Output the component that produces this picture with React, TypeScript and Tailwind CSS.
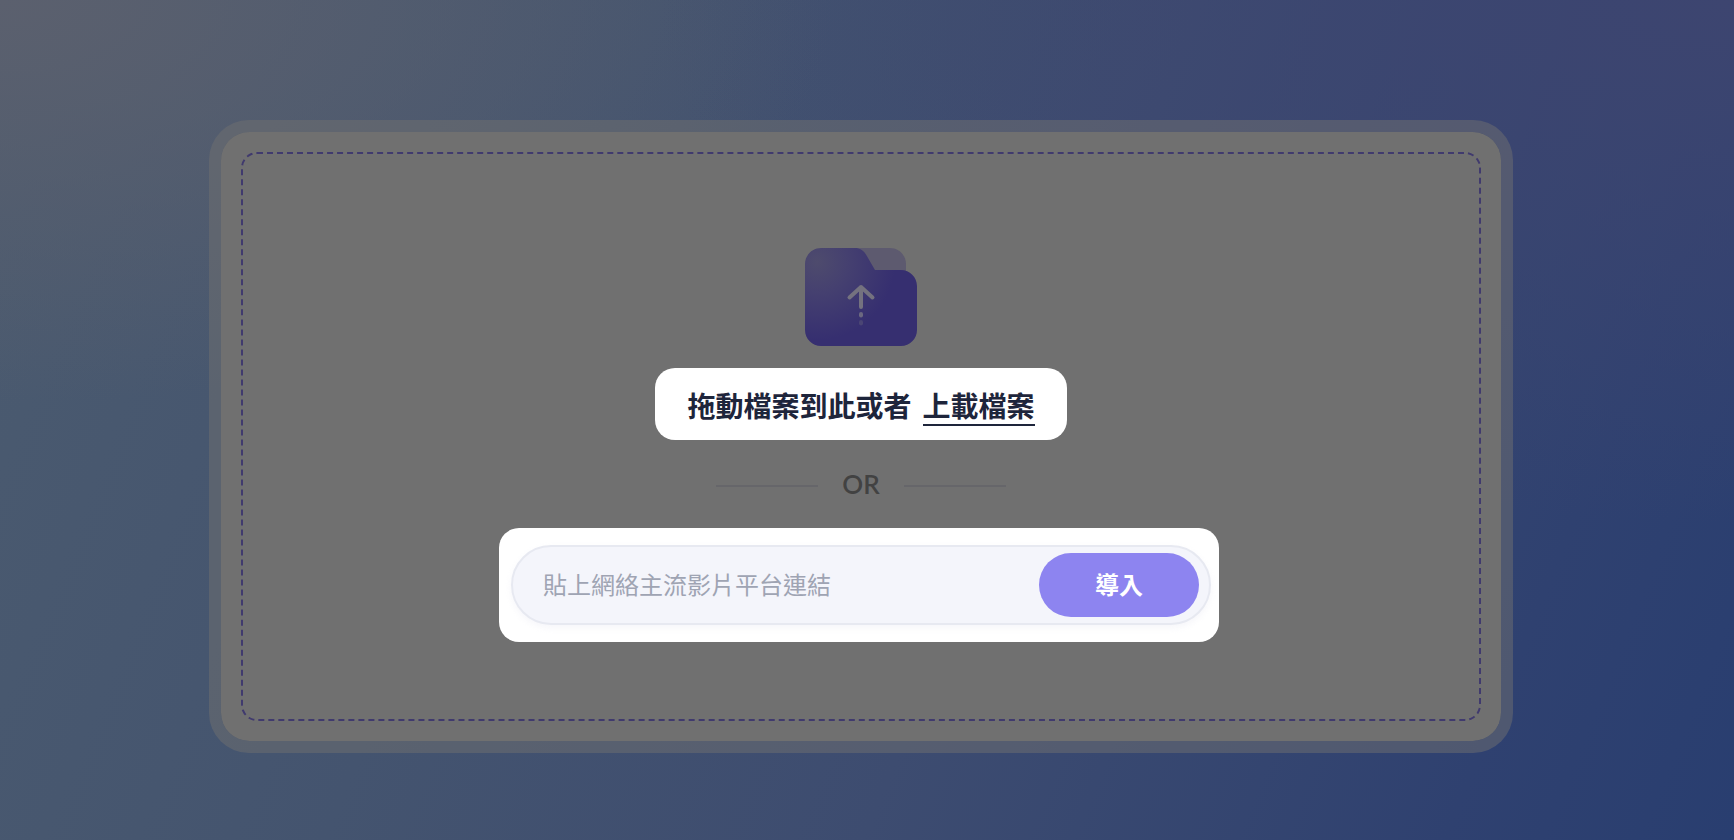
import { FormEvent, useRef, useState } from "react";

function FolderUploadIcon() {
  return (
    <svg width="112" height="98" viewBox="0 0 112 98" fill="none" aria-hidden="true">
      <defs>
        <radialGradient id="folder" cx="0" cy="0" r="1" gradientUnits="userSpaceOnUse" gradientTransform="translate(12 14) rotate(45) scale(78 78)">
          <stop stopColor="#4e4b6d" />
          <stop offset="0.4" stopColor="#454070" />
          <stop offset="1" stopColor="#362f70" />
        </radialGradient>
      </defs>
      <path d="M50 0H85C93.800 0 101 7.200 101 16V34H50Z" fill="#5d5a6f" />
      <path d="M16 0H50C55 0 58.500 2.500 61 6.500L70 22H96C104.800 22 112 29.200 112 38V82C112 90.800 104.800 98 96 98H16C7.200 98 0 90.800 0 82V16C0 7.200 7.200 0 16 0Z" fill="url(#folder)" />
      <path d="M56 59V39M44.500 49.500L56 39L67.500 49.500" stroke="#74727f" strokeWidth="4" strokeLinecap="round" strokeLinejoin="round" />
      <rect x="54" y="64" width="4" height="5.500" rx="2" fill="#6b6880" />
      <rect x="54" y="72" width="4" height="5.500" rx="2" fill="#4a4574" />
    </svg>
  );
}

export default function App() {
  const fileInput = useRef<HTMLInputElement>(null);
  const [link, setLink] = useState("");
  const submit = (event: FormEvent) => event.preventDefault();

  return (
    <main className="min-h-screen bg-[radial-gradient(ellipse_at_0%_0%,#5b606e_0%,#5b606e00_34%),radial-gradient(ellipse_at_100%_0%,#3d4570_0%,#3d457000_44%),linear-gradient(112deg,#4b5b6f_0%,#44546f_32%,#3d4c70_58%,#2f4170_86%,#293e70_100%)] pt-[120px] pr-[221px] pb-[87px] pl-[209px] font-['Noto_Sans_CJK_TC',sans-serif]">
      <section className="rounded-[40px] border-[12px] border-[#70707080] bg-[#707070] bg-clip-padding p-5">
        <div className="flex flex-col items-center rounded-2xl border-2 border-dashed border-[#403a6e] pt-[94px] pb-[77px]">
          <FolderUploadIcon />

          <div className="mt-[22px] flex h-[72px] items-baseline gap-[11px] rounded-[20px] bg-white px-8 pt-[18px] text-[28px] leading-[38px] font-bold text-[#1e253b]">
            <p>拖動檔案到此或者</p>
            <button type="button" onClick={() => fileInput.current?.click()} className="border-b-2 border-[#1e253b]">
              上載檔案
            </button>
            <input ref={fileInput} type="file" className="hidden" aria-label="上載檔案" />
          </div>

          <div className="mt-[30px] flex h-8 items-center gap-6">
            <span className="h-0.5 w-[102px] bg-[#66666a]" />
            <span className="pb-1 font-['Lato',sans-serif] text-[26px] leading-7 font-semibold text-[#424242]">OR</span>
            <span className="h-0.5 w-[102px] bg-[#66666a]" />
          </div>

          <form onSubmit={submit} className="mt-[26px] mr-1 rounded-[20px] bg-white py-[17px] pr-2 pl-3">
            <div className="flex h-20 w-[700px] items-center rounded-full border-2 border-[#e7e9f1] bg-[#f4f5fb] pr-[10px] pl-[30px] shadow-[0_3px_6px_#e8e9f266]">
              <input
                type="text"
                value={link}
                onChange={(event) => setLink(event.target.value)}
                aria-label="貼上網絡主流影片平台連結"
                placeholder="貼上網絡主流影片平台連結"
                className="h-full min-w-0 flex-1 bg-transparent pb-1 text-2xl text-[#1e253b] outline-none placeholder:text-[#9fa4b3]"
              />
              <button type="submit" className="h-16 w-40 rounded-full bg-[#8d84f0] pb-0.5 text-2xl font-bold text-white">
                導入
              </button>
            </div>
          </form>
        </div>
      </section>
    </main>
  );
}
